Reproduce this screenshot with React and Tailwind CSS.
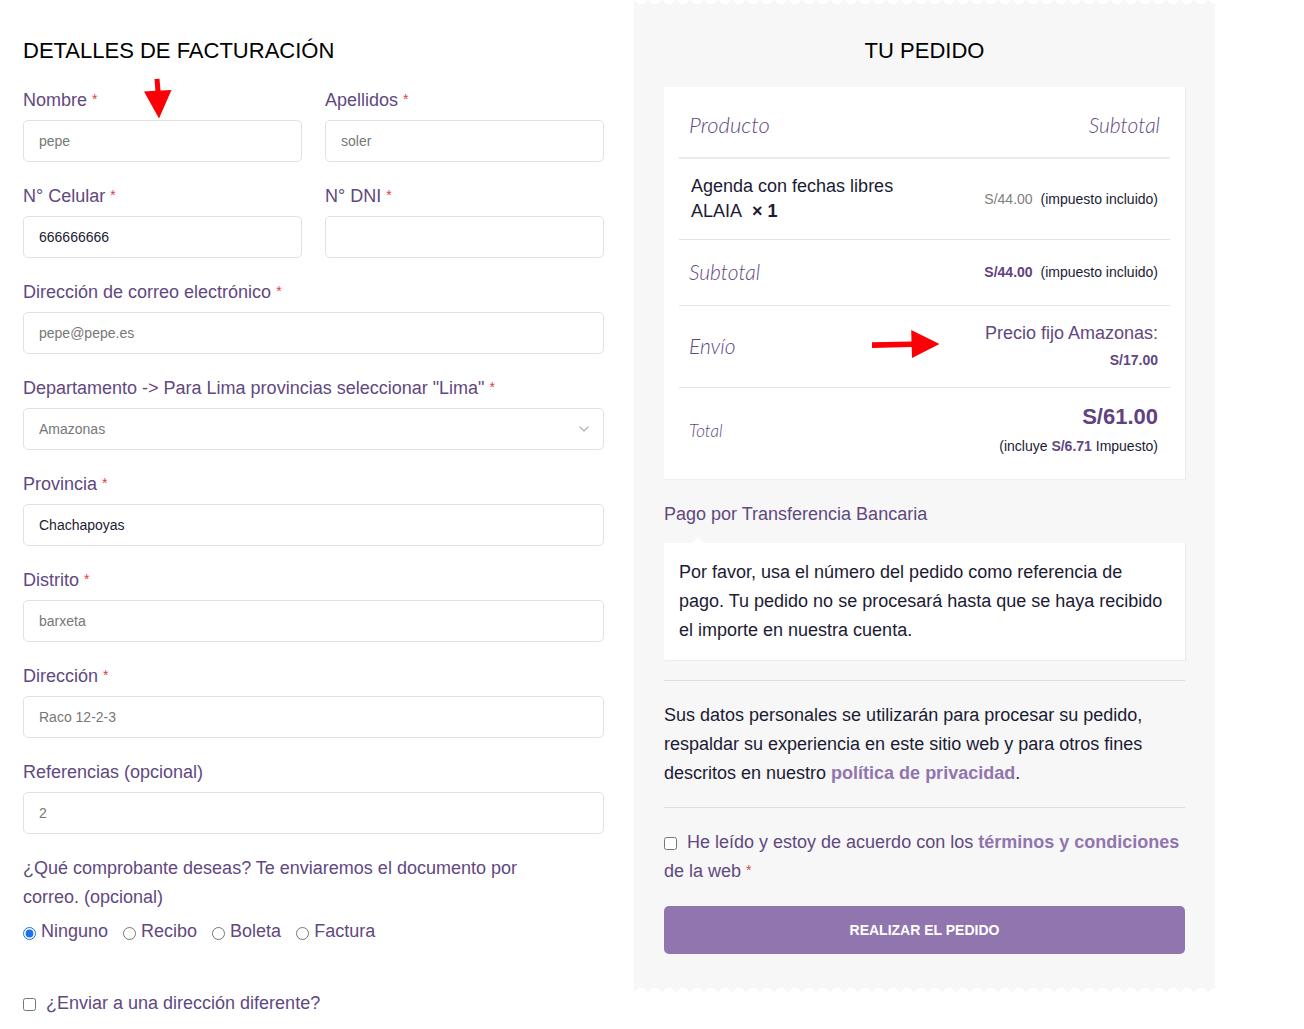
import { useState } from "react";
import { ChevronDown } from "lucide-react";

const fields = [
    { id: "nombre", label: "Nombre", placeholder: "pepe", required: true, half: true },
    { id: "apellidos", label: "Apellidos", placeholder: "soler", required: true, half: true },
    { id: "celular", label: "N° Celular", value: "666666666", required: true, half: true },
    { id: "dni", label: "N° DNI", required: true, half: true },
    { id: "correo", label: "Dirección de correo electrónico", placeholder: "pepe@pepe.es", required: true },
    {
        id: "departamento",
        label: 'Departamento -> Para Lima provincias seleccionar "Lima"',
        options: ["Amazonas", "Lima"],
        required: true
    },
    { id: "provincia", label: "Provincia", value: "Chachapoyas", required: true },
    { id: "distrito", label: "Distrito", placeholder: "barxeta", required: true },
    { id: "direccion", label: "Dirección", placeholder: "Raco 12-2-3", required: true },
    { id: "referencias", label: "Referencias (opcional)", placeholder: "2" }
];

const receipts = ["Ninguno", "Recibo", "Boleta", "Factura"];

const control =
    "block w-full h-[42px] px-[15px] text-sm bg-white border border-[#e2e2e2] rounded-[5px] outline-none";

function Required() {

    return <span className="text-sm leading-5 text-[#d9453d] align-[2px]">*</span>;

}

function Field({ field }) {

    return (

        <div className={field.half ? "" : "col-span-2"}>

            <label htmlFor={field.id} className="block h-[29px] mb-[5px]">
                {field.label} {field.required && <Required />}
            </label>

            {field.options ? (

                <div className="relative">

                    <select id={field.id} className={`${control} appearance-none text-[#777777]`}>
                        {field.options.map(option => (
                            <option key={option}>{option}</option>
                        ))}
                    </select>

                    <ChevronDown
                        className="absolute right-3 top-[13px] w-4 h-4 text-[#b5b5b5] pointer-events-none"
                        strokeWidth={2}
                    />

                </div>

            ) : (

                <input
                    id={field.id}
                    type="text"
                    className={`${control} text-[#1c1b33] placeholder:text-[#777777]`}
                    placeholder={field.placeholder}
                    defaultValue={field.value}
                />

            )}

        </div>

    );

}

function BillingForm() {

    const [receipt, setReceipt] = useState("Ninguno");

    return (

        <section className="pt-[37px]">

            <h2 className="text-[22px] leading-7 text-black">DETALLES DE FACTURACIÓN</h2>

            <div className="grid grid-cols-2 gap-x-[23px] gap-y-5 mt-[21px]">
                {fields.map(field => (
                    <Field key={field.id} field={field} />
                ))}
            </div>

            <fieldset className="mt-5">

                <legend className="max-w-[520px] mb-[5px]">
                    ¿Qué comprobante deseas? Te enviaremos el documento por correo. (opcional)
                </legend>

                <div className="flex gap-[15px]">
                    {receipts.map(name => (
                        <label key={name} className="flex items-center gap-[5px]">
                            <input
                                type="radio"
                                name="comprobante"
                                className="w-[13px] h-[13px] mt-1 accent-[#1a73e8]"
                                checked={receipt === name}
                                onChange={() => setReceipt(name)}
                            />
                            {name}
                        </label>
                    ))}
                </div>

            </fieldset>

            <label className="flex items-center gap-[10px] mt-[43px]">
                <input type="checkbox" className="w-[13px] h-[13px] mt-[2px]" />
                ¿Enviar a una dirección diferente?
            </label>

        </section>

    );

}

const scriptText = "font-['Lato'] italic font-light text-[#61487f]";

function OrderTable() {

    return (

        <div className="bg-white px-[15px] py-[5px] shadow-[1px_1px_1px_rgba(0,0,0,0.04)]">

            <table className="w-full table-fixed border-collapse text-sm text-[#1c1b33]">

                <thead>
                    <tr className="h-[66px] border-b-2 border-[#ebebeb]">
                        <th className={`pl-[10px] text-left text-[22px] ${scriptText}`}>Producto</th>
                        <th className={`pr-[10px] text-right text-[21px] ${scriptText}`}>Subtotal</th>
                    </tr>
                </thead>

                <tbody>

                    <tr className="h-[81px] border-b border-[#e4e4e4]">
                        <td className="pl-3 text-lg leading-[25px]">
                            Agenda con fechas libres ALAIA&nbsp; <strong>×&nbsp;1</strong>
                        </td>
                        <td className="pr-3 text-right">
                            <span className="mr-1 text-[#808080]">S/44.00</span> (impuesto incluido)
                        </td>
                    </tr>

                    <tr className="h-[66px] border-b border-[#e4e4e4]">
                        <th className={`pl-[10px] text-left text-[21px] ${scriptText}`}>Subtotal</th>
                        <td className="pr-3 text-right">
                            <strong className="mr-1 text-[#61417f]">S/44.00</strong> (impuesto incluido)
                        </td>
                    </tr>

                    <tr className="h-[82px] border-b border-[#e4e4e4]">
                        <th className={`pl-[10px] text-left text-[21px] ${scriptText}`}>Envío</th>
                        <td className="pr-3 text-right text-[#61487f]">
                            <span className="block text-lg leading-[29px]">Precio fijo Amazonas:</span>
                            <strong className="block leading-[25px]">S/17.00</strong>
                        </td>
                    </tr>

                    <tr className="h-[87px]">
                        <th className={`pl-[10px] text-left text-[17px] ${scriptText}`}>Total</th>
                        <td className="pr-3 text-right">
                            <strong className="block text-[22px] leading-8 text-[#61417f]">S/61.00</strong>
                            <span className="block leading-[27px]">
                                (incluye <strong className="text-[#61487f]">S/6.71</strong> Impuesto)
                            </span>
                        </td>
                    </tr>

                </tbody>

            </table>

        </div>

    );

}

function OrderSummary() {

    return (

        <section className="self-start">

            <div className="bg-[#f7f7f7] px-[30px] pb-[34px]">

                {/* scalloped paper edge */}
                <div className="h-1 -mx-[30px] bg-[radial-gradient(circle_at_7px_-3px,#ffffff_7px,transparent_7px)] bg-size-[14px_4px]" />

                <h2 className="pt-[33px] text-[22px] leading-7 text-black text-center mb-[22px]">TU PEDIDO</h2>

                <OrderTable />

                <p className="mt-[21px] mb-[14px]">Pago por Transferencia Bancaria</p>

                <div className="relative bg-white p-[15px] text-[#1c1b33] shadow-[1px_1px_1px_rgba(0,0,0,0.04)]">
                    <span className="absolute left-7 -top-[6px] border-x-[6px] border-b-[6px] border-x-transparent border-b-white" />
                    Por favor, usa el número del pedido como referencia de pago. Tu pedido no se procesará
                    hasta que se haya recibido el importe en nuestra cuenta.
                </div>

                <hr className="mt-5 mb-5 border-[#dddddd]" />

                <p className="text-[#1c1b33]">
                    Sus datos personales se utilizarán para procesar su pedido, respaldar su experiencia en
                    este sitio web y para otros fines descritos en nuestro{" "}
                    <a href="#privacidad" className="font-bold text-[#9175af]">política de privacidad</a>.
                </p>

                <hr className="mt-[19px] mb-5 border-[#dddddd]" />

                <label className="block">
                    <input type="checkbox" className="w-[13px] h-[13px] mr-[10px] align-[-2px]" />
                    He leído y estoy de acuerdo con los{" "}
                    <a href="#terminos" className="font-bold text-[#9175af]">términos y condiciones</a>{" "}
                    de la web <Required />
                </label>

                <button
                    type="button"
                    className="block w-full h-12 mt-5 rounded-[5px] bg-[#9175af] text-sm font-bold text-white"
                >
                    REALIZAR EL PEDIDO
                </button>

            </div>

            <div className="h-[6px] bg-[#f7f7f7] bg-[radial-gradient(circle_at_7px_7px,#ffffff_7px,transparent_7px)] bg-size-[14px_6px]" />

        </section>

    );

}

function App() {

    return (

        <main className="relative grid grid-cols-2 gap-[30px] pl-[23px] pr-[89px] bg-white font-['Liberation_Sans',Arial,sans-serif] text-lg leading-[29px] text-[#61487f]">

            <BillingForm />

            <OrderSummary />

            {/* annotation arrows */}
            <svg className="absolute left-[143px] top-[78px] w-[30px] h-[42px]" viewBox="0 0 30 42" fill="#fb0007">
                <path d="M11.5 1 L16.5 .8 L17.5 12.4 L28.5 12 L16 40.5 L1 13.5 L12.4 12.8 Z" />
            </svg>

            <svg className="absolute left-[871px] top-[329px] w-[70px] h-[30px]" viewBox="0 0 70 30" fill="#fb0007">
                <path d="M1 13.3 L40.5 12.6 L40.2 1 L68.5 15 L41 29 L40.7 18 L1 18.9 Z" />
            </svg>

        </main>

    );

}

export default App;
